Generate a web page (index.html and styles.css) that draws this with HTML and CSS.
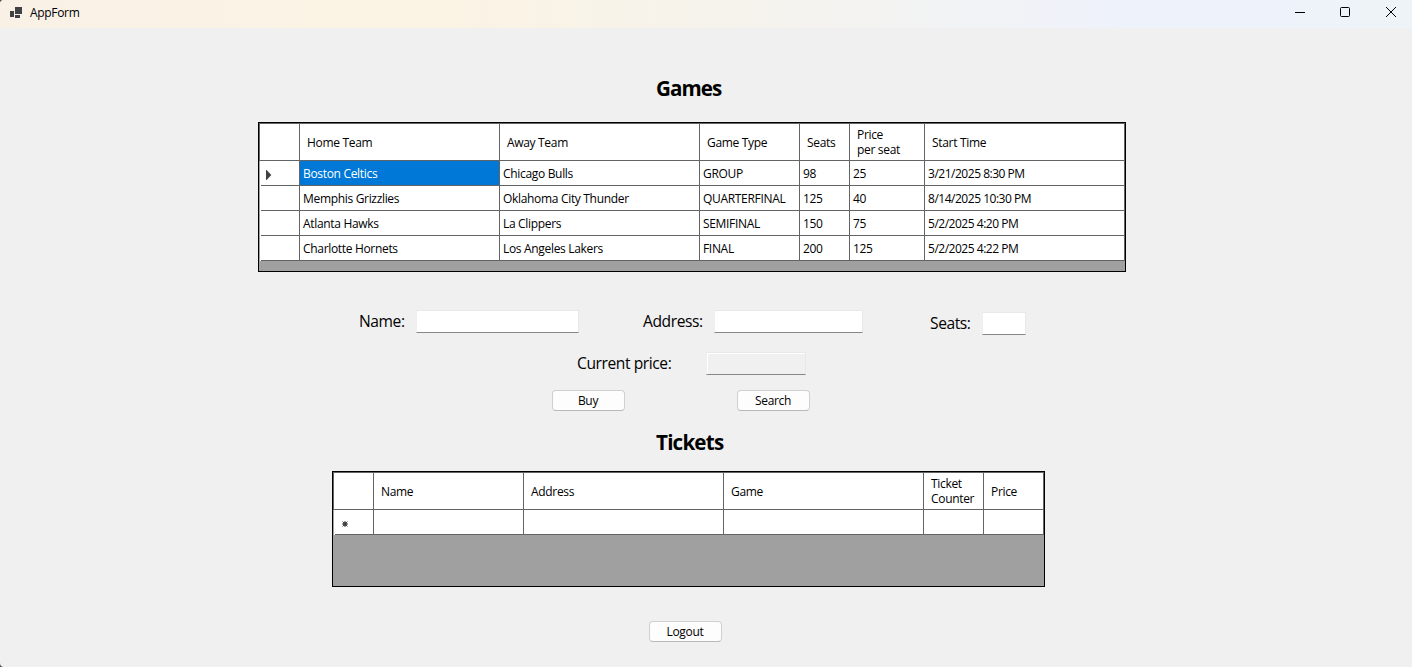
FILE: index.html
```html
<!DOCTYPE html>
<html lang="en">
<head>
<meta charset="utf-8">
<title>AppForm</title>
<link rel="stylesheet" href="styles.css">
</head>
<body>
<header class="titlebar">
  <svg class="app-icon" width="12" height="12" viewBox="0 0 12 12"><path fill="#3f4144" d="M0 4h4v6H0zM5 0h7v7H5zM5 8h5v3H5z"/></svg>
  <span class="app-name">AppForm</span>
  <div class="controls">
    <svg width="10" height="11" viewBox="0 0 10 11"><path d="M0 5.5h10" stroke="#000"/></svg>
    <svg width="10" height="11" viewBox="0 0 10 11"><rect x=".5" y=".5" width="9" height="9" rx="1" fill="none" stroke="#000"/></svg>
    <svg width="10" height="11" viewBox="0 0 10 11"><path d="M0 0l10 10M10 0L0 10" stroke="#000" fill="none"/></svg>
  </div>
</header>
<main class="form">
  <h1 class="title title-games">Games</h1>
  <section class="grid games">
    <div class="row head"><span></span><span>Home Team</span><span>Away Team</span><span>Game Type</span><span>Seats</span><span>Price<br>per seat</span><span>Start Time</span></div>
    <div class="row"><span class="marker"><svg width="6" height="10" viewBox="0 0 6 10"><path fill="#404040" d="M0 0h.6l4.7 5-4.7 5H0z"/></svg></span><span class="selected">Boston Celtics</span><span>Chicago Bulls</span><span>GROUP</span><span>98</span><span>25</span><span class="date">3/21/2025 8:30 PM</span></div>
    <div class="row"><span class="marker"></span><span>Memphis Grizzlies</span><span>Oklahoma City Thunder</span><span>QUARTERFINAL</span><span>125</span><span>40</span><span class="date">8/14/2025 10:30 PM</span></div>
    <div class="row"><span class="marker"></span><span>Atlanta Hawks</span><span>La Clippers</span><span>SEMIFINAL</span><span>150</span><span>75</span><span class="date">5/2/2025 4:20 PM</span></div>
    <div class="row"><span class="marker"></span><span>Charlotte Hornets</span><span>Los Angeles Lakers</span><span>FINAL</span><span>200</span><span>125</span><span class="date">5/2/2025 4:22 PM</span></div>
  </section>
  <div class="fields">
    <label class="field name"><span>Name:</span><input type="text"></label>
    <label class="field address"><span>Address:</span><input type="text"></label>
    <label class="field seats"><span>Seats:</span><input type="text"></label>
  </div>
  <label class="field price"><span>Current price:</span><input type="text" readonly></label>
  <div class="actions"><button>Buy</button><button>Search</button></div>
  <h1 class="title title-tickets">Tickets</h1>
  <section class="grid tickets">
    <div class="row head"><span></span><span>Name</span><span>Address</span><span>Game</span><span>Ticket<br>Counter</span><span>Price</span></div>
    <div class="row"><span class="marker new"><svg width="6" height="6" viewBox="0 0 6 6"><circle cx="3" cy="3" r="1.9" fill="#404040"/><path d="M3 0v6M0 3h6M.6.6l4.8 4.8M5.4.6L.6 5.4" stroke="#404040" stroke-width="1"/></svg></span><span></span><span></span><span></span><span></span><span></span></div>
  </section>
  <button class="logout">Logout</button>
</main>
</body>
</html>
```
FILE: styles.css
```css
* { box-sizing: border-box; }
html { background: #4a4a4a; }
body {
  margin: 0;
  height: 667px;
  overflow: hidden;
  border-radius: 4px 0 0 4px;
  background: #f0f0f0;
  color: #000;
  font: 12px/15px "Open Sans", "Noto Sans", sans-serif;
  letter-spacing: -0.32px;
}
.titlebar {
  display: flex;
  align-items: center;
  height: 28px;
  padding: 0 16px 3px 10px;
  background: linear-gradient(90deg, #f9f1e6 0, #fbf3e3 30%, #f5f3ee 55%, #eef2fb 80%, #eef3fb 90%, #eef3f7 100%);
}
.app-name { margin-left: 8px; }
.controls { display: flex; gap: 35px; margin-left: auto; }
.controls svg { display: block; }
.controls svg:nth-child(-n+2) { margin-left: -1px; margin-right: 1px; }
.form { display: flex; flex-direction: column; align-items: flex-start; }
.title { margin: 0; font-size: 20.6px; line-height: 28px; font-weight: 700; letter-spacing: -0.8px; }
.title-games { margin: 46px 0 20px 656px; letter-spacing: -0.95px; }
.title-tickets { margin: 17px 0 15px 656px; }
.grid { border: 1px solid #000; background: #a0a0a0; }
.games { width: 868px; height: 150px; margin-left: 258px; }
.tickets { width: 713px; height: 116px; margin-left: 332px; }
.row { display: grid; height: 25px; border-left: 1px solid #646464; }
.games .row { grid-template-columns: 40px 200px 200px 100px 50px 75px 200px; }
.tickets .row { grid-template-columns: 40px 150px 200px 200px 60px 60px; }
.row span {
  display: flex;
  align-items: center;
  padding-left: 3px;
  background: #fff;
  border-right: 1px solid #646464;
  border-bottom: 1px solid #646464;
  white-space: nowrap;
}
.head { height: 38px; border-top: 1px solid #646464; }
.head span { padding-left: 7px; }
.row .marker { padding: 2px 0 0 6px; box-shadow: -1px 0 #a0a0a0; }
.row:not(.head) .marker {
  border-bottom: 0;
  background: linear-gradient(#646464, #646464) 1px 100% / 100% 1px no-repeat #fff;
}
.row .new { padding: 3px 0 0 8px; }
.row .selected { background: #0078d7; color: #fff; }
.row .date { letter-spacing: -0.48px; }
.fields { display: flex; margin: 38px 0 0 359px; }
.field { display: flex; align-items: center; font-size: 15.6px; line-height: 21px; letter-spacing: -0.42px; white-space: nowrap; }
.field span { padding: 1px 0; }
.field input {
  height: 23px;
  padding: 0;
  border: 1px solid #e8e8e8;
  border-left-color: #efefef;
  border-bottom-color: #868686;
  background: #fff;
}
.name span { width: 57px; }
.name input { width: 163px; }
.address { margin-left: 64px; }
.address span { width: 71px; }
.address input { width: 149px; }
.seats { margin: 2px 0 -2px 67px; }
.seats span { width: 52px; }
.seats input { width: 44px; }
.price { margin: 19px 0 0 577px; }
.price span { width: 129px; }
.price input { width: 100px; background: #f0f0f0; box-shadow: inset 1px 1px #fff; }
button {
  width: 73px;
  height: 21px;
  padding: 0;
  border: 1px solid #d0d0d0;
  border-bottom-color: #b9b9b9;
  border-radius: 4px;
  background: #fdfdfd;
  color: #000;
  font: inherit;
  letter-spacing: inherit;
}
.actions { display: flex; gap: 112px; margin: 15px 0 0 552px; }
.actions button, .logout { padding-right: 1px; }
.logout { margin: 34px 0 0 649px; }
```
